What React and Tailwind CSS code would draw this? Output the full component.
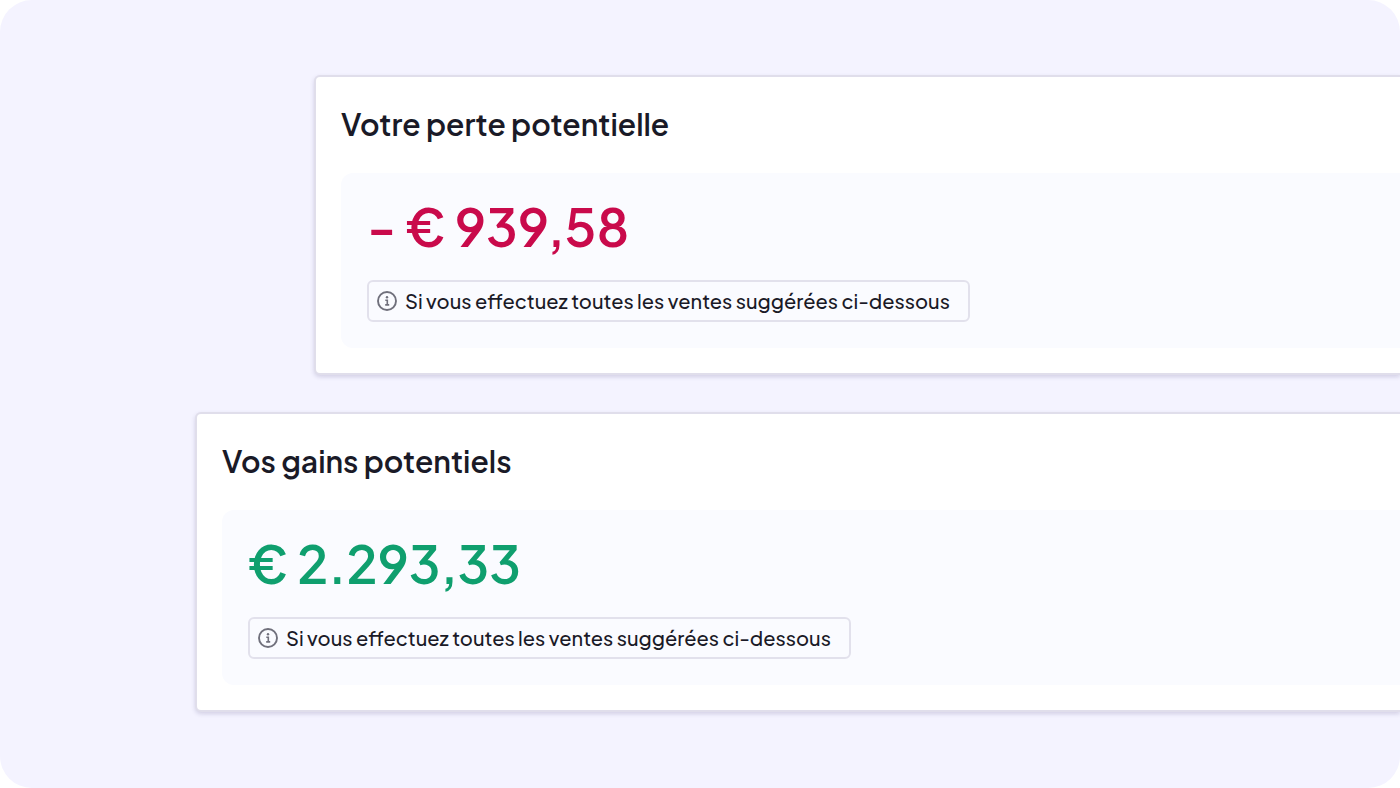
function InfoIcon() {
  return (
    <svg viewBox="0 0 20 20" className="size-5 shrink-0" fill="none" stroke="#70707c" aria-hidden="true">
      <circle cx="10" cy="10" r="9" strokeWidth="1.9" />
      <path d="M8.3 9.2H10.3V13.6M8.2 13.9H12.2" strokeWidth="1.6" />
      <circle cx="10" cy="6.3" r="1.2" fill="#70707c" stroke="none" />
    </svg>
  );
}

function Card({ title, amount, tone, note, className }) {
  return (
    <section className={`rounded-l-md border-2 border-r-0 border-[#e0deeb] bg-white pt-[27px] pb-[25px] pl-[25px] shadow-[0_2px_4px_rgba(60,50,110,0.18)] ${className}`}>
      <h2 className="text-[30px] leading-10 font-semibold text-[#1a1a27]">{title}</h2>
      <div className="mt-[29px] rounded-l-xl bg-[#fafbff] px-[26px] pt-[25px] pb-[26px]">
        <p className={`text-[52px] leading-14 font-semibold ${tone}`}>{amount}</p>
        <div className="mt-[26px] flex h-[42px] w-fit items-center gap-2 rounded-md border-2 border-[#e2e1ec] pr-[18px] pl-2">
          <InfoIcon />
          <span className="text-[20px] leading-7 font-medium text-[#1a1a27]">{note}</span>
        </div>
      </div>
    </section>
  );
}

export default function App() {
  const note = "Si vous effectuez toutes les ventes suggérées ci-dessous";
  return (
    <main className="flex min-h-screen flex-col justify-center gap-[37px] overflow-hidden rounded-[32px] bg-[#f4f3ff] pb-px font-['Plus_Jakarta_Sans','Open_Sans',sans-serif]">
      <Card className="ml-[314px]" title="Votre perte potentielle" amount="- € 939,58" tone="text-[#c90a4b]" note={note} />
      <Card className="ml-[195px]" title="Vos gains potentiels" amount="€ 2.293,33" tone="text-[#0f9f6e]" note={note} />
    </main>
  );
}
